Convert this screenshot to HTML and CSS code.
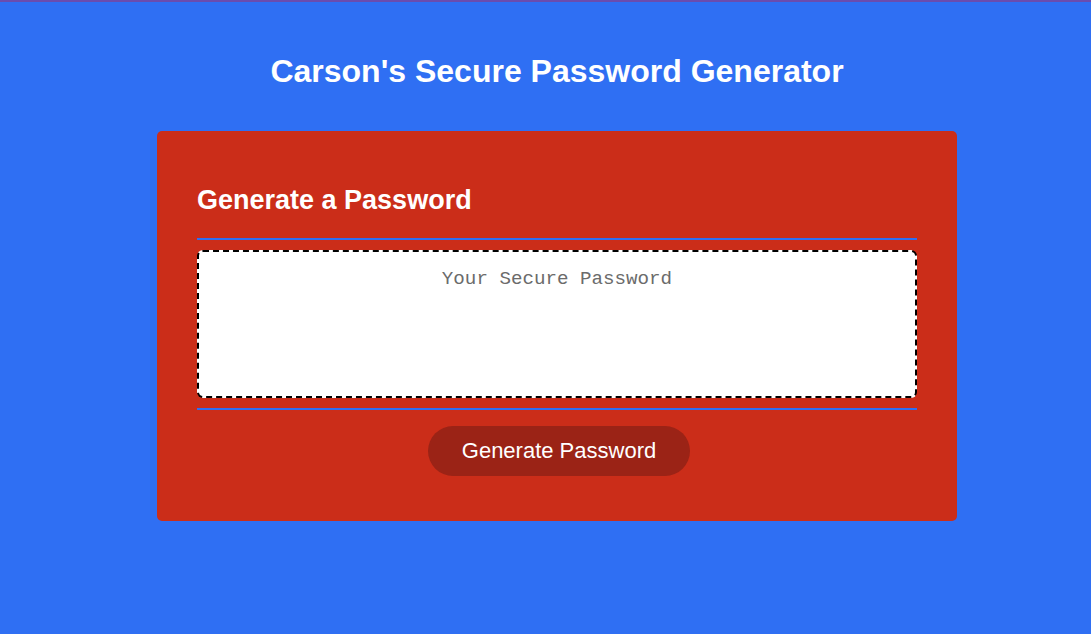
FILE: index.html
```html
<!DOCTYPE html>
<html lang="en">
<head>
<meta charset="utf-8">
<title>Password Generator</title>
<link rel="stylesheet" href="styles.css">
</head>
<body>
<div class="topline"></div>
<div class="wrapper">
  <header class="title">Carson's Secure Password Generator</header>
  <div class="card">
    <div class="card-header">
      <h2>Generate a Password</h2>
    </div>
    <div class="card-body">
      <textarea readonly placeholder="Your Secure Password" class="password"></textarea>
    </div>
    <div class="card-footer">
      <button class="btn">Generate Password</button>
    </div>
  </div>
</div>
</body>
</html>
```

FILE: styles.css
```css
html, body {
  margin: 0;
  padding: 0;
  height: 100%;
}
body {
  background: #2f6ff3;
  font-family: "Liberation Sans", Arial, sans-serif;
  color: #fff;
}
.topline {
  height: 2px;
  background: #6a4cae;
}
.wrapper {
  display: flex;
  flex-direction: column;
  align-items: center;
  padding-left: 23px;
}
.title {
  font-size: 32px;
  font-weight: bold;
  line-height: 37px;
  margin-top: 51px;
  text-align: center;
}
.card {
  margin-top: 41px;
  width: 800px;
  box-sizing: border-box;
  background: #cb2d19;
  border-radius: 5px;
  padding: 0 40px 45px;
}
.card-header {
  padding-top: 54px;
  padding-bottom: 22px;
  border-bottom: 2px solid #2f6ff3;
}
.card-header h2 {
  margin: 0;
  font-size: 27px;
  line-height: 31px;
  font-weight: bold;
}
.card-body {
  padding: 10px 0;
  border-bottom: 2px solid #2f6ff3;
  display: flex;
}
.password {
  display: block;
  width: 100%;
  height: 148px;
  box-sizing: border-box;
  border: 2px dashed #000;
  border-radius: 6px;
  background: #fff;
  resize: none;
  font-family: "Liberation Mono", "Courier New", monospace;
  font-size: 19.2px;
  text-align: center;
  padding: 16px 10px;
  color: #444;
  outline: none;
}
.password::placeholder {
  color: #6b6b6b;
}
.card-footer {
  display: flex;
  justify-content: center;
  padding-top: 16px;
  padding-left: 4px;
}
.btn {
  background: #9b2316;
  color: #fff;
  border: none;
  border-radius: 25px;
  height: 50px;
  padding: 0 34px;
  font-family: "Liberation Sans", Arial, sans-serif;
  font-size: 22px;
  cursor: pointer;
}
```
